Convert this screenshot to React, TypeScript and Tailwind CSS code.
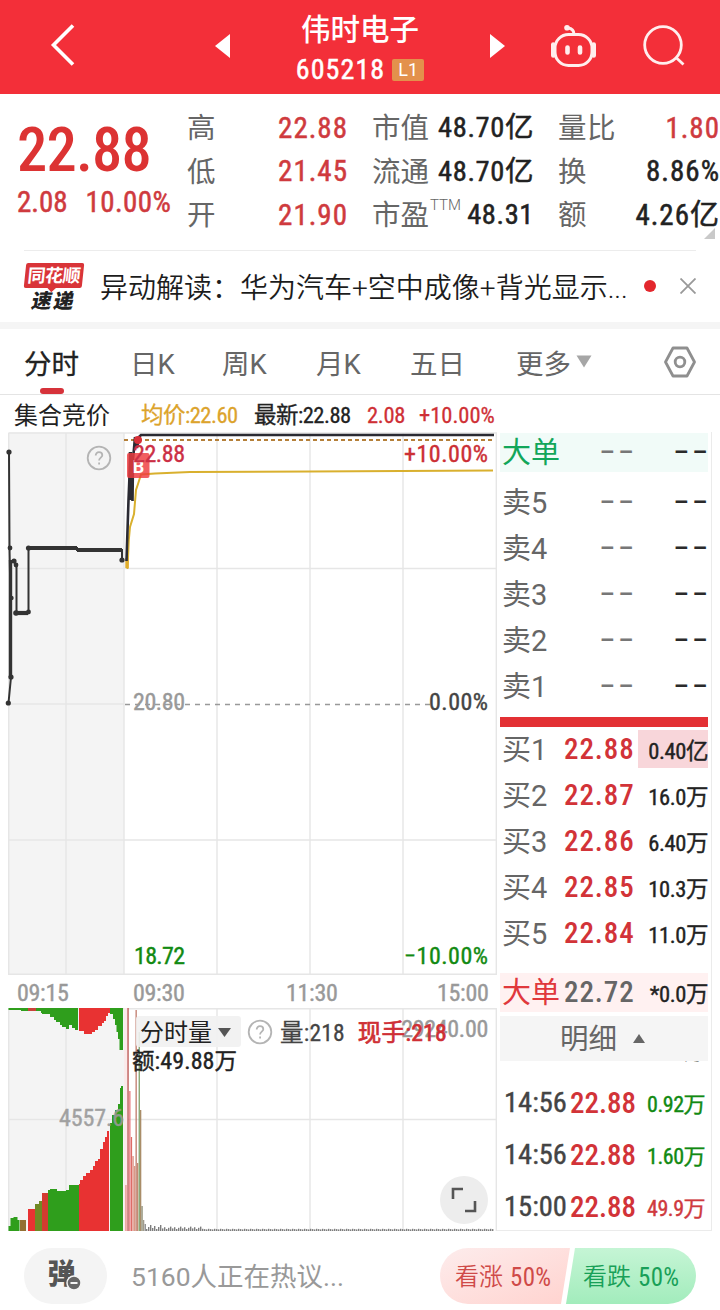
import type { ReactNode } from "react";

const stats = [
  { a: "高", av: "22.88", b: "市值", bv: "48.70亿", c: "量比", cv: "1.80", red: true },
  { a: "低", av: "21.45", b: "流通", bv: "48.70亿", c: "换", cv: "8.86%" },
  { a: "开", av: "21.90", b: "市盈", sup: "TTM", bv: "48.31", c: "额", cv: "4.26亿" },
];

const tabs = [
  { label: "分时", width: "w-[106px]" },
  { label: "日K", width: "w-[92px]" },
  { label: "周K", width: "w-[94px]" },
  { label: "月K", width: "w-[94px]" },
  { label: "五日", width: "w-[106px]" },
];

const asks = ["卖5", "卖4", "卖3", "卖2", "卖1"];

const bids = [
  { label: "买1", price: "22.88", amount: "0.40亿" },
  { label: "买2", price: "22.87", amount: "16.0万" },
  { label: "买3", price: "22.86", amount: "6.40万" },
  { label: "买4", price: "22.85", amount: "10.3万" },
  { label: "买5", price: "22.84", amount: "11.0万" },
];

const trades = [
  { time: "14:56", price: "22.88", amount: "0.92万", color: "text-[#128a12]" },
  { time: "14:56", price: "22.88", amount: "1.60万", color: "text-[#128a12]" },
  { time: "15:00", price: "22.88", amount: "49.9万", color: "text-[#cf3a3e]" },
];

// [x, top] of the opening minutes in the volume pane
const openBars: [number, number, string][] = [
  [125.3, 177, "#e98f88"],
  [127.4, 0, "#b9524e"],
  [129.2, 83, "#e8737a"],
  [130.8, 129, "#dd6b66"],
  [132.4, 148, "#dc8a7c"],
  [134, 158, "#d99a86"],
  [135.5, 2, "#c07a6c"],
  [137, 155, "#c58a72"],
  [138.6, 24, "#7fa06a"],
  [140, 102, "#a98d68"],
  [141.4, 198, "#8a8a72"],
  [143, 212, "#a09a8c"],
  [144.6, 216, "#8a8a8a"],
];

const tinyBars = Array.from({ length: 174 }, (_, i) => ({
  x: 146 + i * 2,
  h: i < 28 ? 2 + ((i * 7) % 5) * (i < 8 ? 1 : 0.6) : 1.6 + ((i * 5) % 3) * 0.3,
}));

function Dashes({ dark }: { dark?: boolean }) {
  return (
    <span className={`-mr-[3px] inline-block origin-right scale-x-[1.1] text-[25px] font-medium tracking-[3px] ${dark ? "text-[#2a2a2a]" : "text-[#777]"}`}>
      ––
    </span>
  );
}

function Help({ className }: { className: string }) {
  return (
    <svg className={className} width="26" height="26" viewBox="0 0 26 26" fill="none" stroke="#b4b4b4" strokeWidth="1.8">
      <circle cx="13" cy="13" r="11.3" />
      <path d="M9.7 10.6c0-2 1.4-3.4 3.3-3.4s3.3 1.2 3.3 3c0 2.4-3.2 2.6-3.2 5.2" />
      <path d="M13.1 17.4v2.2" />
    </svg>
  );
}

function Header() {
  return (
    <header className="flex h-[94px] items-center bg-[#f32f39] text-white">
      <svg className="ml-[49px] -mt-1" width="28" height="46" viewBox="0 0 28 46" fill="none" stroke="#fff" strokeWidth="3.6">
        <path d="M24 3.5 4.5 23 24 42.5" />
      </svg>
      <svg className="ml-[137px] -mt-[2px]" width="18" height="26" viewBox="0 0 18 26" fill="#fff">
        <path d="M16 1v24L1 13z" />
      </svg>
      <div className="flex w-[256px] flex-col items-center pt-[6px]">
        <h1 className="-mt-[3px] text-[29.5px] leading-[34px] font-medium">伟时电子</h1>
        <div className="mt-[8px] flex items-center gap-[7px] leading-[30px]">
          <span className="text-[28px] tracking-[1.1px] [-webkit-text-stroke:.5px]">605218</span>
          <span className="flex h-[22px] w-[32px] items-center justify-center rounded-[2px] bg-[#e3914c] font-['Roboto'] text-[18px] leading-none">L1</span>
        </div>
      </div>
      <svg className="-mt-[2px]" width="18" height="26" viewBox="0 0 18 26" fill="#fff">
        <path d="M2 1v24l15-12z" />
      </svg>
      <svg className="ml-[44px] -mt-[2px]" width="48" height="46" viewBox="0 0 48 46" fill="none" stroke="#ffeeee" strokeWidth="3">
        <rect x="5" y="11.5" width="37" height="31" rx="13.5" />
        <path d="M24 11.5c0-4-1.5-6-6-6.500" />
        <circle cx="17" cy="4.700" r="2.8" fill="#ffeeee" stroke="none" />
        <path d="M3.2 21.5v11M43.8 21.5v11" strokeWidth="4.4" strokeLinecap="round" />
        <path d="M17.5 24.5v5M30 24.5v5" strokeWidth="4.6" strokeLinecap="round" />
      </svg>
      <svg className="ml-[44px] -mt-[2px]" width="46" height="46" viewBox="0 0 46 46" fill="none" stroke="#ffeeee" strokeWidth="2.8">
        <circle cx="21" cy="22" r="18.3" />
        <path d="m33.5 34 8 7.5" />
      </svg>
    </header>
  );
}

function Quote() {
  return (
    <section className="relative flex h-[156px] pt-[13px] [-webkit-text-stroke:.5px]">
      <div className="w-[187px] pl-[17px] text-[#dc3333]">
        <div className="mt-[14px] text-[60.5px] leading-[60px] font-medium tracking-[-.8px] [-webkit-text-stroke:0]">22.88</div>
        <div className="mt-[5px] flex gap-[18px] text-[29px] leading-[32px] text-[#cf3a3e]">
          <span>2.08</span>
          <span className="tracking-[.4px]">10.00%</span>
        </div>
      </div>
      <div className="flex-1">
        {stats.map((s) => (
          <div key={s.a} className="flex h-[43.3px] items-center text-[28.5px] leading-none whitespace-nowrap">
            <span className="w-[72px] pt-[2px] text-[#666] [-webkit-text-stroke:0]">{s.a}</span>
            <span className="w-[89px] text-right text-[29px] tracking-[1px] text-[#cf3a3e]">{s.av}</span>
            <span className="ml-[24px] w-[58px] pt-[2px] text-[#666] [-webkit-text-stroke:0]">{s.b}</span>
            {s.sup && <sup className="-mt-1 w-[29px] font-['Roboto'] text-[15px] leading-none font-light text-[#666] [-webkit-text-stroke:0]">{s.sup}</sup>}
            <span className={`${s.sup ? "w-[75px]" : "w-[104px]"} text-right tracking-[.6px] text-[#222]`}>{s.bv}</span>
            <span className="ml-[24px] pt-[2px] tracking-[.5px] text-[#666] [-webkit-text-stroke:0]">{s.c}</span>
            <span className={`ml-auto text-[29px] tracking-[1px] ${s.red ? "text-[#cf3a3e]" : "text-[#222]"}`}>{s.cv}</span>
          </div>
        ))}
      </div>
      <svg className="absolute right-[5px] bottom-[11px]" width="11" height="11" viewBox="0 0 11 11" fill="#c9c9c9">
        <path d="M11 0v11H0z" />
      </svg>
    </section>
  );
}

function News() {
  return (
    <section className="mx-6 flex h-[72px] items-center border-t border-[#ececec]">
      <div className="flex w-[60px] flex-col items-center">
        <div className="relative flex h-[25px] w-[58px] -skew-x-6 items-center justify-center rounded-[2px] bg-[#d93438] text-[18px] leading-none font-bold tracking-[-.5px] text-white">
          同花顺
          <span className="absolute -bottom-[3px] left-[25px] size-[6px] rotate-45 bg-[#d93438]" />
        </div>
        <div className="mt-[4px] -skew-x-12 text-[20px] leading-[19px] font-black tracking-[2px] text-[#222]">速递</div>
      </div>
      <p className="mt-[5px] ml-[16px] w-[544px] font-['Roboto','Noto_Sans_CJK_SC',sans-serif] text-[28px] font-[350] whitespace-nowrap text-[#1c1c1c]">
        异动解读：华为汽车+空中成像+背光显示...
      </p>
      <span className="-mt-[2px] size-3 shrink-0 rounded-full bg-[#e3272d]" />
      <svg className="-mt-[2px] ml-[24px] shrink-0" width="16" height="16" viewBox="0 0 16 16" stroke="#999" strokeWidth="1.8">
        <path d="m.5.5 15 15M15.500.5l-15 15" />
      </svg>
    </section>
  );
}

function Tabs() {
  return (
    <nav className="flex h-[66px] items-center border-b border-[#e4e4e4] pl-[24px] font-['Roboto','Noto_Sans_CJK_SC',sans-serif] text-[27.5px] leading-none text-[#666]">
      {tabs.map((t, i) => (
        <div key={t.label} className={`relative flex h-full items-center pt-[7px] ${t.width} ${i === 0 ? "text-[#222]" : ""}`}>
          <span className={i === 0 ? "[-webkit-text-stroke:.3px]" : ""}>{t.label}</span>
          {i === 0 && <span className="absolute bottom-0 left-[16px] h-[6px] w-6 rounded-full bg-[#d6323a]" />}
        </div>
      ))}
      <span className="pt-[7px]">更多</span>
      <svg className="ml-[5px]" width="16" height="13" viewBox="0 0 16 13" fill="#a6a6a6">
        <path d="M.5.5h15L8 12.5z" />
      </svg>
      <svg className="ml-[71px]" width="34" height="32" viewBox="0 0 34 32" fill="none" stroke="#8f8f8f" strokeWidth="2.8" strokeLinejoin="round">
        <path d="M10 2h14l7.5 14L24 30H10L2.5 16z" />
        <circle cx="17" cy="16" r="4.8" />
      </svg>
    </nav>
  );
}

function PriceChart() {
  return (
    <svg className="block" width="497" height="543" viewBox="0 432 497 543" fill="none" fontSize="24">
      <rect x="8.5" y="432.5" width="115.5" height="543" fill="#f4f4f4" />
      <g stroke="#e6e6e6" strokeWidth="1.4">
        <path d="M8.5 433H497M8.5 568.5H496M8.5 704H124M8.5 840H496M8.5 974.3H497" />
        <path d="M8.7 433v542M66 433v542M124 433v542M217 433v542M310 433v542M403 433v542M496.3 433v542" />
      </g>
      <path d="M124 440H494" stroke="#b5803a" strokeWidth="2" strokeDasharray="4 3" />
      <path d="M125 704.5H430" stroke="#999" strokeWidth="1.6" strokeDasharray="5 5" />

      {/* opening auction */}
      <path d="M9 452 9.5 548 10.5 598 11 677 8.5 703" stroke="#333" strokeWidth="2" />
      <path d="M10.5 560V677" stroke="#333" strokeWidth="3.4" />
      <path d="M12 561h3v4h1.5v48H28.5V548H77V550H122v10" stroke="#333" strokeWidth="2" />
      <path d="M29 548H77M77 550H122" stroke="#333" strokeWidth="4.2" />
      <path d="M15 613H28" stroke="#333" strokeWidth="4.2" />
      <g fill="#333">
        <circle cx="9" cy="452" r="2.6" />
        <circle cx="10" cy="548" r="2.4" />
        <circle cx="14" cy="561" r="2.6" />
        <circle cx="16" cy="565" r="2.4" />
        <circle cx="11.5" cy="598" r="2.2" />
        <circle cx="16" cy="613" r="2.8" />
        <circle cx="28.5" cy="612" r="2.4" />
        <circle cx="28.5" cy="548" r="2.6" />
        <circle cx="11" cy="677" r="2.6" />
        <circle cx="8.3" cy="703" r="2.6" />
        <circle cx="122" cy="560" r="2.6" />
      </g>

      {/* continuous trading: average and last price */}
      <path d="M127.5 569 128.8 540 130 527 134 514 136 490 138 484 141 474.5 155 473.5 190 472 310 471.5 493 470.5" stroke="#d9b02e" strokeWidth="2" />
      <path d="M127 558v10" stroke="#e0ad2c" strokeWidth="3.4" />
      <path d="M126.5 561 128.5 500 130.5 452 132.5 501 133 460 135 437 137 448 139 437 141 435H494" stroke="#2b2b33" strokeWidth="2.6" />
      <path d="M130.5 452V500" stroke="#2b2b33" strokeWidth="3.6" />
      <circle cx="138" cy="440" r="4" fill="#d83038" />
      <rect x="127" y="453" width="22.5" height="25" rx="2" fill="#ee3a3e" fillOpacity=".82" />
      <text x="138.5" y="473" fill="#fff" fontSize="18" fontWeight="700" textAnchor="middle" fontFamily="Roboto">B</text>

      <g className="[-webkit-text-stroke:.4px]">
        <text x="133" y="462" fill="#cc2f45" stroke="#cc2f45" strokeWidth=".4" textLength="52">22.88</text>
        <text x="404" y="462" fill="#cc2f35" stroke="#cc2f35" strokeWidth=".4" textLength="84">+10.00%</text>
        <text x="133" y="710" fill="#999" stroke="#999" strokeWidth=".4" textLength="52">20.80</text>
        <text x="429" y="710" fill="#444" stroke="#444" strokeWidth=".4" textLength="59">0.00%</text>
        <text x="134" y="964" fill="#128a12" stroke="#128a12" strokeWidth=".4" textLength="51">18.72</text>
        <text x="404" y="964" fill="#128a12" stroke="#128a12" strokeWidth=".4" textLength="84">−10.00%</text>
      </g>
    </svg>
  );
}

function VolumeChart() {
  return (
    <svg className="block" width="497" height="223" viewBox="0 0 497 223" fill="none">
      <rect x="8.5" width="115.5" height="223" fill="#f4f4f4" />
      <g stroke="#e6e6e6" strokeWidth="1.4">
        <path d="M8.5 .7H497M8.5 111.5H496" />
        <path d="M8.7 0v223M66 0v223M217 0v223M310 0v223M403 0v223M496.3 0v223" />
      </g>
      <path d="M124 0h4v223h-4z" fill="#fbeaea" />

      {/* unmatched volume, hanging from the top */}
      <path d="M8.5 0H78V22h-3V20h-3V17h-3v4h-3V19h-4V17h-2V14h-4V12h-2V9h-4V6h-4V6h-4V5h-1V3h-20V2H8.5z" fill="#2f9e1c" />
      <path d="M28 0h8v3h-8z" fill="#c9423a" />
      <path d="M79 0h31V5h-2V8h-2v5h-2V15h-2v3h-4v4h-3v2h-3v2h-8v-3h-5z" fill="#e83232" />
      <path d="M110 0h13V42h-3.5V31H118V24h-1.5V17H115V11h-2V6h-3z" fill="#2f9e1c" />

      {/* matched volume, standing on the base line */}
      <path d="M8.5 223V218h2V210h3V209h4v3h2v11z" fill="#2f9e1c" />
      <path d="M20 223V212h6v11z" fill="#937033" />
      <path d="M28 223V201h7V197h1v26z" fill="#e83232" />
      <path d="M35 223V196h4V193h3V186h2v37z" fill="#6f8a24" />
      <path d="M42 223V185h6v38z" fill="#d23b30" />
      <path d="M48 223V182h2V181h7v2h9V182h3V177h10v46z" fill="#2f9e1c" />
      <path d="M79 223V176h1V172h3V168h3V165h4V162h3V158h2V153h3V151h2V141h3V134h2V129h2V123h2v100z" fill="#e83232" />
      <path d="M110 223V115h2V107h3V102h3V96h2V80h1V78h2v145z" fill="#2f9e1c" />
      <text x="59" y="117.5" fill="#999" stroke="#999" strokeWidth=".4" opacity=".9" fontSize="24" textLength="65">4557.6</text>

      {openBars.map(([x, top, color]) => (
        <rect key={x} x={x} y={top} width="1.3" height={223 - top} fill={color} />
      ))}
      {tinyBars.map((b) => (
        <rect key={b.x} x={b.x} y={223 - b.h} width="1.4" height={b.h} fill="#7d7d7d" />
      ))}
    </svg>
  );
}

function Charts() {
  return (
    <div className="w-[497px]">
      <div className="relative">
        <PriceChart />
        <Help className="absolute top-[13px] left-[86px]" />
      </div>
      <div className="flex h-[33px] items-center pt-[2px] text-[24px] leading-none tracking-[-.3px] text-[#999] [-webkit-text-stroke:.4px]">
        <span className="w-[116px] pl-[17px]">09:15</span>
        <span className="w-[153px] pl-[17px]">09:30</span>
        <span className="w-[152px] pl-[17px]">11:30</span>
        <span className="pl-[16px]">15:00</span>
      </div>
      <div className="relative">
        <VolumeChart />
        <span className="absolute top-[9px] right-[9px] text-[24px] leading-none tracking-[-.3px] text-[#999] [-webkit-text-stroke:.4px]">29240.00</span>
        <div className="absolute top-[8px] left-[133px] flex items-center text-[23.5px] leading-none whitespace-nowrap">
          <div className="ml-[3px] flex h-[31px] w-[105px] items-center rounded-[3px] bg-[#f1f1f1]/90 pt-[3px] pl-[4px] text-[24px] text-[#222]">
            分时量
            <svg className="-mt-[2px] ml-[6px]" width="13" height="9" viewBox="0 0 13 9" fill="#555">
              <path d="M0 0h13L6.5 9z" />
            </svg>
          </div>
          <Help className="ml-[6px]" />
          <span className="mt-[5px] ml-[7px] tracking-[.2px] text-[#444] [-webkit-text-stroke:.3px]">量:218</span>
          <span className="mt-[5px] ml-[13px] tracking-[.3px] text-[#cf2f35] [-webkit-text-stroke:.7px]">现手:218</span>
        </div>
        <div className="absolute top-[41px] left-[132px] text-[24px] leading-none tracking-[.1px] whitespace-nowrap text-[#222] [-webkit-text-stroke:.4px]">
          <span className="text-[22.5px]">额</span>:49.88<span className="text-[22.5px]">万</span>
        </div>
        <div className="absolute right-[9px] bottom-[7px] flex size-12 items-center justify-center rounded-full bg-[#ededed]">
          <svg width="26" height="26" viewBox="0 0 26 26" fill="none" stroke="#555" strokeWidth="2.6">
            <path d="M2 12V2h10M24 14v10H14" />
          </svg>
        </div>
      </div>
    </div>
  );
}

function BookRow({ label, children, className }: { label: string; children: ReactNode; className: string }) {
  return (
    <div className={`flex items-center leading-none whitespace-nowrap ${className}`}>
      <span className="w-[61px] pt-[2px] pl-[2px] font-['Roboto','Noto_Sans_CJK_SC',sans-serif] text-[29px] font-normal">{label}</span>
      {children}
    </div>
  );
}

function OrderBook() {
  return (
    <aside className="h-[799px] w-[215px] border-r border-b border-[#ebebeb] pt-px pr-[3px] pl-[3px]">
      <BookRow label="大单" className="h-[39px] bg-[#f1fbf8] text-[#12a65a]">
        <span className="w-[74px] text-right"><Dashes /></span>
        <span className="w-[74px] text-right"><Dashes dark /></span>
      </BookRow>
      <div className="mt-[7px]">
        {asks.map((label) => (
          <BookRow key={label} label={label} className="h-[46px] pt-px text-[#666]">
            <span className="w-[74px] text-right"><Dashes /></span>
            <span className="w-[74px] text-right"><Dashes dark /></span>
          </BookRow>
        ))}
      </div>
      <div className="mt-[8px] h-[10px] bg-[#e33034]" />
      <div className="-mt-px">
        {bids.map((b, i) => (
          <BookRow key={b.label} label={b.label} className="h-[46px] text-[#666]">
            <span className="w-[77px] pl-[3px] text-[29px] font-medium tracking-[.9px] text-[#d23338]">{b.price}</span>
            <span className={`flex h-[38px] flex-1 items-center justify-end pt-[5px] text-[22.5px] tracking-[-.4px] text-[#222] [-webkit-text-stroke:.4px] ${i === 0 ? "bg-[#f8d6da]" : ""}`}>
              {b.amount}
            </span>
          </BookRow>
        ))}
      </div>
      <BookRow label="大单" className="mt-[17px] h-[39px] bg-[#fff1f1] text-[#e0383c]">
        <span className="w-[77px] pl-[3px] text-[29px] font-medium tracking-[.9px] text-[#666]">22.72</span>
        <span className="flex-1 pt-[4px] text-right text-[22.5px] tracking-[-.4px] text-[#222] [-webkit-text-stroke:.4px]">*0.0万</span>
      </BookRow>
      <div className="mt-[4px] flex h-[45px] items-center bg-[#f5f5f5] pl-[60px] text-[28.5px] leading-none text-[#666]">
        <span className="pt-[4px]">明细</span>
        <svg className="ml-[16px]" width="12" height="9" viewBox="0 0 12 9" fill="#666">
          <path d="M0 9h12L6 0z" />
        </svg>
      </div>
      {/* tail of the row scrolled under the bar */}
      <div className="flex h-[2px] items-end justify-end overflow-hidden pr-[4px] text-[20px] leading-[20px] text-[#333]">万</div>
      <div className="mt-[14px]">
        {trades.map((t, i) => (
          <div key={i} className="flex h-[52px] items-center pr-[3px] pl-[4px] leading-none whitespace-nowrap">
            <span className="w-[66px] text-[28.5px] text-[#444] [-webkit-text-stroke:.4px]">{t.time}</span>
            <span className="text-[29px] font-medium text-[#d23338]">{t.price}</span>
            <span className={`ml-auto pt-[4px] text-[22px] tracking-[-.5px] [-webkit-text-stroke:.4px] ${t.color}`}>{t.amount}</span>
          </div>
        ))}
      </div>
    </aside>
  );
}

function Footer() {
  return (
    <footer className="flex h-[79px] items-center pt-[14px] pr-6 pb-[3px] pl-6 leading-none whitespace-nowrap">
      <div className="relative flex h-[56px] w-[83px] items-center justify-center rounded-full bg-[#f4f4f4] pr-[8px] pb-[2px] text-[28px] font-black text-[#555]">
        弹
        <svg className="absolute top-[27px] left-[42px]" width="16" height="16" viewBox="0 0 16 16">
          <circle cx="8" cy="8" r="7" fill="#666" stroke="#f4f4f4" strokeWidth="1.5" />
          <path d="M4.5 8h7" stroke="#f4f4f4" strokeWidth="2" />
        </svg>
      </div>
      <span className="ml-[24px] pt-[3px] font-['Roboto','Noto_Sans_CJK_SC',sans-serif] text-[26.5px] font-normal text-[#999]">5160人正在热议...</span>
      <div className="ml-auto flex h-[56px] text-[24px] font-[350]">
        <div className="flex w-[130px] items-center rounded-l-full bg-linear-to-br from-[#fdecec] to-[#ffd3cf] pt-[2px] pl-[15px] text-[#cf4a48] [clip-path:polygon(0_0,100%_0,calc(100%-9px)_100%,0_100%)]">
          看涨<span className="ml-[7px] text-[25px] font-normal tracking-[.3px]">50%</span>
        </div>
        <div className="-ml-[4px] flex w-[130px] items-center rounded-r-full bg-linear-to-b from-[#c5f5d5] to-[#a2ecbc] pt-[2px] pl-[17px] text-[#18a058] [clip-path:polygon(9px_0,100%_0,100%_100%,0_100%)]">
          看跌<span className="ml-[7px] text-[25px] font-normal tracking-[.3px]">50%</span>
        </div>
      </div>
    </footer>
  );
}

export default function App() {
  return (
    <div className="h-[1310px] w-[720px] overflow-hidden bg-white font-['Roboto_Condensed','Noto_Sans_CJK_SC',sans-serif]">
      <Header />
      <Quote />
      <News />
      <div className="h-[7px] bg-[#f5f5f5]" />
      <Tabs />
      <div className="flex h-[37px] items-center pt-[4px] pl-[14px] text-[22.5px] leading-none whitespace-nowrap [-webkit-text-stroke:.3px]">
        <span className="w-[127px] text-[24px] text-[#222] [-webkit-text-stroke:0]">集合竞价</span>
        <span className="w-[113px] tracking-[-.5px] text-[#dca32c]">均价:22.60</span>
        <span className="w-[113px] tracking-[-.5px] text-[#222]">最新:22.88</span>
        <span className="w-[52px] tracking-[-.3px] text-[#cf2f35]">2.08</span>
        <span className="text-[#cf2f35]">+10.00%</span>
      </div>
      <div className="flex">
        <Charts />
        <OrderBook />
      </div>
      <Footer />
    </div>
  );
}
